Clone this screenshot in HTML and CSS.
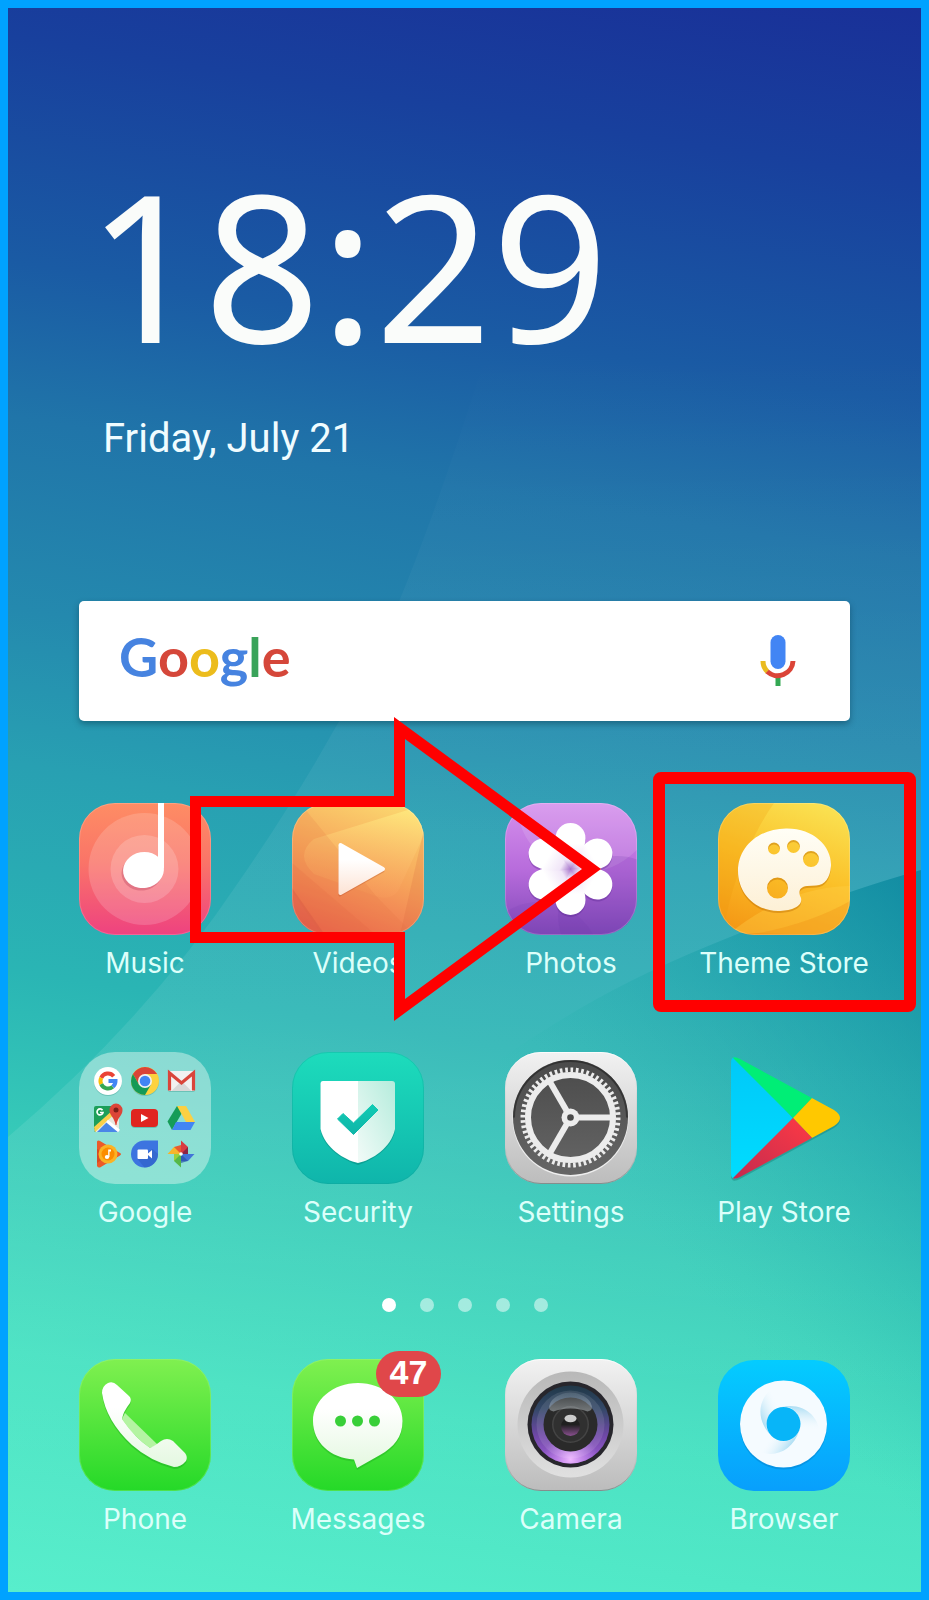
FILE: index.html
```html
<!DOCTYPE html>
<html lang="en">
<head>
<meta charset="utf-8">
<meta name="viewport" content="width=device-width, initial-scale=1">
<title>Home screen</title>
<link rel="stylesheet" href="styles.css">
</head>
<body>
<main class="screen">
  <svg class="wallpaper" viewBox="0 0 913 1584" preserveAspectRatio="none" aria-hidden="true">
    <defs>
      <linearGradient id="facetA" x1="0" y1="0" x2="0" y2="1"><stop offset="0" stop-color="#fff" stop-opacity="0"/><stop offset=".25" stop-color="#fff" stop-opacity=".04"/><stop offset=".6" stop-color="#fff" stop-opacity=".09"/><stop offset="1" stop-color="#fff" stop-opacity="0"/></linearGradient>
      <linearGradient id="facetB" gradientUnits="userSpaceOnUse" x1="913" y1="862" x2="500" y2="1250"><stop offset="0" stop-color="#008098" stop-opacity=".68"/><stop offset=".37" stop-color="#0897a0" stop-opacity=".34"/><stop offset=".67" stop-color="#14b0a4" stop-opacity=".08"/><stop offset=".8" stop-color="#20d0b0" stop-opacity="0"/></linearGradient>
    </defs>
    <path fill="url(#facetA)" d="M480 340Q430 500 390 596Q330 730 232 872Q140 1010 0 1129V1584H913V340Z"/>
    <path fill="url(#facetB)" d="M913 862Q820 888 700 938Q610 975 540 1020Q440 1080 380 1160L300 1584H913Z"/>
  </svg>

  <header class="clock">
    <time class="clock-time" datetime="18:29">18:29</time>
    <p class="clock-date">Friday, July 21</p>
  </header>

  <form class="search" role="search">
    <span class="wordmark"><span class="blue">G</span><span class="red">o</span><span class="yellow">o</span><span class="blue">g</span><span class="green">l</span><span class="red">e</span></span>
    <input class="search-input" type="search" aria-label="Search">
    <button class="mic" type="button" aria-label="Voice search">
      <svg viewBox="0 0 36 52"><rect x="10.500" width="15" height="34" rx="7.500" fill="#4285f4"/><path d="M15.500 42h5v9h-5z" fill="#34a853"/><path d="M3 26a15 15 0 0 0 4.500 10.800" fill="none" stroke="#eabb20" stroke-width="5"/><path d="M7.200 36.500A15.300 15.300 0 0 0 33 26" fill="none" stroke="#db4437" stroke-width="5"/></svg>
    </button>
  </form>

  <nav class="apps" aria-label="Apps">
    <a class="app" href="#music">
      <svg class="icon" viewBox="0 0 132 132">
        <defs><linearGradient id="mu" x1="0" y1="0" x2="0" y2="1"><stop offset="0" stop-color="#fe8d64"/><stop offset=".45" stop-color="#fa7468"/><stop offset="1" stop-color="#ee4280"/></linearGradient></defs>
        <rect width="132" height="132" rx="36" fill="url(#mu)"/><rect x=".5" y=".5" width="131" height="131" rx="35.500" fill="none" stroke="#fff" stroke-opacity=".18"/>
        <circle cx="65.500" cy="66" r="56" fill="#fff" opacity=".16"/><circle cx="65.500" cy="66" r="34" fill="#fff" opacity=".18"/>
        <g fill="#b03050" opacity=".3" transform="translate(-1 2)"><ellipse cx="64" cy="67.500" rx="20.500" ry="18" transform="rotate(-10 64 67.500)"/></g>
        <g fill="#fff"><ellipse cx="64.500" cy="67" rx="20.500" ry="18" transform="rotate(-10 64.500 67)"/><path d="M79 0h6v66l-6-8z"/></g>
      </svg>
      <span class="label">Music</span>
    </a>
    <a class="app" href="#videos">
      <svg class="icon" viewBox="0 0 132 132">
        <defs><linearGradient id="vi" x1=".7" y1="0" x2=".35" y2="1"><stop offset="0" stop-color="#fbd56e"/><stop offset=".5" stop-color="#f6a35a"/><stop offset="1" stop-color="#ee6a50"/></linearGradient><linearGradient id="vi2" x1=".7" y1="0" x2=".5" y2="1"><stop offset="0" stop-color="#ffec80"/><stop offset="1" stop-color="#f7985a" stop-opacity=".6"/></linearGradient><linearGradient id="vw" x1="0" y1="0" x2="0" y2="1"><stop offset=".3" stop-color="#fff"/><stop offset="1" stop-color="#fde4d6"/></linearGradient><clipPath id="vc"><rect width="132" height="132" rx="36"/></clipPath></defs>
        <g clip-path="url(#vc)"><rect width="132" height="132" fill="url(#vi)"/>
        <path d="M22 36L132 2V32L106 88Q98 98 84 93L22 71Q2 52 22 36Z" fill="url(#vi2)" opacity=".8"/>
        <path d="M0 0h8L84 93L122 132H30L0 88Z" fill="#e0703c" opacity=".16"/><path d="M0 85L33 132H0Z" fill="#c84a44" opacity=".28"/><path d="M132 26L108 132H132Z" fill="#d9643c" opacity=".2"/><path d="M0 60L84 132H0Z" fill="#e0603c" opacity=".15"/></g>
        <rect x=".5" y=".5" width="131" height="131" rx="35.500" fill="none" stroke="#fff" stroke-opacity=".2"/>
        <path d="M48 44L91 68L48 92Z" fill="#b04a28" stroke="#b04a28" stroke-width="3" stroke-linejoin="round" opacity=".3"/><path d="M48.500 42L91 66L48.500 90Z" fill="url(#vw)" stroke="url(#vw)" stroke-width="4" stroke-linejoin="round"/>
      </svg>
      <span class="label">Videos</span>
    </a>
    <a class="app" href="#photos">
      <svg class="icon" viewBox="0 0 132 132">
        <defs><linearGradient id="ph" x1="0" y1="0" x2="0" y2="1"><stop offset="0" stop-color="#d590ec"/><stop offset=".5" stop-color="#b86cdc"/><stop offset="1" stop-color="#8048b8"/></linearGradient><linearGradient id="pe" gradientUnits="userSpaceOnUse" x1="0" y1="-46" x2="0" y2="0"><stop offset=".45" stop-color="#fff"/><stop offset=".8" stop-color="#f1e6f8"/><stop offset="1" stop-color="#a878cc"/></linearGradient><path id="petal" d="M0 0C-7-8-15-19-15-31A15 15 0 0 1 15-31C15-19 7-8 0 0Z"/><clipPath id="pc"><rect width="132" height="132" rx="36"/></clipPath></defs>
        <g clip-path="url(#pc)"><rect width="132" height="132" fill="url(#ph)"/><circle cx="81" cy="0" r="69" fill="#fff" opacity=".12"/><circle cx="34" cy="160" r="61" fill="#6c38a8" opacity=".13"/><circle cx="112" cy="112" r="59" fill="#6c38a8" opacity=".18"/></g>
        <rect x=".5" y=".5" width="131" height="131" rx="35.500" fill="none" stroke="#fff" stroke-opacity=".2"/>
        <g transform="translate(65.500 68)" fill="#5a2890" opacity=".35"><use href="#petal"/><use href="#petal" transform="rotate(60)"/><use href="#petal" transform="rotate(120)"/><use href="#petal" transform="rotate(180)"/><use href="#petal" transform="rotate(240)"/><use href="#petal" transform="rotate(300)"/></g>
        <g transform="translate(65.500 66)" fill="url(#pe)"><use href="#petal" transform="rotate(60)"/><use href="#petal" transform="rotate(120)"/><use href="#petal" transform="rotate(180)"/><use href="#petal" transform="rotate(240)"/><use href="#petal" transform="rotate(300)"/><use href="#petal"/></g>
      </svg>
      <span class="label">Photos</span>
    </a>
    <a class="app" href="#theme-store">
      <svg class="icon" viewBox="0 0 132 132">
        <defs><linearGradient id="th" x1=".7" y1="0" x2=".35" y2="1"><stop offset="0" stop-color="#fae050"/><stop offset=".5" stop-color="#fbc028"/><stop offset="1" stop-color="#f59a16"/></linearGradient><linearGradient id="tw" x1="0" y1="0" x2="0" y2="1"><stop offset="0" stop-color="#fffef6"/><stop offset="1" stop-color="#fdf0d6"/></linearGradient><clipPath id="tc"><rect width="132" height="132" rx="36"/></clipPath><path id="pal" fill-rule="evenodd" d="M68 25.500C96 25 114 44 113 63C112 75 107 82 98 82.500L89 83C81 84 80 89 83 95C85 104 72 108 60 108C37 108 20 90 20 68C20 44 40 26 68 25.500ZM62 45.500a6 6 0 1 0-12 0a6 6 0 1 0 12 0ZM82 43.500a6.500 6.500 0 1 0-13 0a6.500 6.500 0 1 0 13 0ZM101 56a8 8 0 1 0-16 0a8 8 0 1 0 16 0ZM70 85a10.500 10.500 0 1 0-21 0a10.500 10.500 0 1 0 21 0Z"/></defs>
        <g clip-path="url(#tc)"><rect width="132" height="132" fill="url(#th)"/><path d="M0 0H56C35 30 12 80 5 132H0Z" fill="#ee9408" opacity=".22"/><path d="M12 130Q70 84 132 83V132Z" fill="#ffd24a" opacity=".35"/><path d="M30 132Q90 122 132 98V132Z" fill="#f08a10" opacity=".3"/></g>
        <rect x=".5" y=".5" width="131" height="131" rx="35.500" fill="none" stroke="#fff" stroke-opacity=".2"/>
        <use href="#pal" y="2" fill="#b86a00" opacity=".4"/><use href="#pal" fill="url(#tw)"/>
      </svg>
      <span class="label">Theme Store</span>
    </a>

    <a class="app" href="#google">
      <svg class="icon" viewBox="0 0 132 132">
        <rect width="132" height="132" rx="36" fill="#d5f3ec" opacity=".5"/>
        <g transform="translate(29 29)"><circle cy="1" r="14" fill="#3a9a8c" opacity=".4"/><circle r="14" fill="#fff"/><g fill="none" stroke-width="4"><path d="M5.700-4.800A7.500 7.500 0 0 0-6.800-3.200" stroke="#ea4335"/><path d="M-6.800-3.200A7.500 7.500 0 0 0-6.800 3.200" stroke="#fbbc05"/><path d="M-6.800 3.200A7.500 7.500 0 0 0 4.800 5.800" stroke="#34a853"/><path d="M4.800 5.800A7.500 7.500 0 0 0 7.500 0H.500" stroke="#4285f4"/></g></g>
        <g transform="translate(66 29)"><circle cy="1" r="14" fill="#3a9a8c" opacity=".4"/><circle r="14" fill="#fdd23e"/><path d="M-12.100-7A14 14 0 0 1 12.100-7H0L-6 3.500Z" fill="#db4437"/><path d="M-12.100-7A14 14 0 0 0 0 14L6 3.500L-6 3.500Z" fill="#149a56"/><circle r="7" fill="#f1f1f1"/><circle r="5.300" fill="#4285f4"/></g>
        <g transform="translate(102.500 29)"><rect x="-13.500" y="-9" width="27" height="20" rx="2" fill="#3a9a8c" opacity=".4"/><rect x="-13.500" y="-10" width="27" height="20" rx="2" fill="#f1f1f1"/><path d="M-10 10L0 0L10 10Z" fill="#d8d8d8"/><path d="M-12 9.500V-8L0 2L12-8V9.500" fill="none" stroke="#d9453a" stroke-width="3.200"/></g>
        <g transform="translate(28 67)"><rect x="-13" y="-13" width="25" height="26" rx="2" fill="#1d9f59"/><path d="M-13 11L12-13V13H-11Z" fill="#e8e8e0"/><path d="M-10 13L1 2L12 13Z" fill="#4a86e8"/><path d="M-13 8L7-10L11-8L-12 13Z" fill="#fbd04a"/><path d="M0 2L12 12" stroke="#fff" stroke-width="3"/><path d="M-4.500-8.800A3 3 0 1 0-4-6.500H-7" fill="none" stroke="#fff" stroke-width="1.700"/><path d="M9-15.500a6.500 6.500 0 0 1 6.500 6.500C15.500-3 10.500-2 9.500 6H8.500C7.500-2 2.500-3 2.500-9A6.500 6.500 0 0 1 9-15.500Z" fill="#dc4438"/><circle cx="9" cy="-9" r="2.500" fill="#7c1d18"/></g>
        <g transform="translate(65.500 66)"><rect x="-13.500" y="-8" width="27" height="18" rx="4" fill="#3a9a8c" opacity=".45"/><rect x="-13.500" y="-9" width="27" height="18" rx="4" fill="#e02520"/><path d="M-3.500-4L4 0L-3.500 4Z" fill="#fff"/></g>
        <g transform="translate(102 66)"><path d="M-4-12H5L-5.500 6L-9 12L-13.500 3.500Z" fill="#159c58"/><path d="M-4-12H5L14 4H5Z" fill="#fbd043"/><path d="M-5 4H14L9.500 12H-9Z" fill="#4285f4"/></g>
        <g transform="translate(29 102)"><path d="M-11-12.500Q-10-14-8-13L12-1Q14 0 12 1.500L-8 13.500Q-10 14-11 12Z" fill="#ec5a28"/><path d="M-11-5L1 0L-11 9Z" fill="#d94b20"/><circle cx="0" cy="0" r="9.500" fill="#fbb325"/><circle r="6.500" fill="#fb8c00"/><ellipse cx="-1" cy="3" rx="2.200" ry="2" fill="#fff"/><path d="M.2 3V-4.500H3V-2.500H1.500V3Z" fill="#fff"/></g>
        <g transform="translate(65.500 102)"><path d="M0-13.500H13.500V0A13.500 13.500 0 1 1 0-13.500Z" fill="#3c74e0"/><path d="M-7 5L0 13.500A13.500 13.500 0 0 0 13.500 0L8-5Z" fill="#2c5cc0" opacity=".5"/><rect x="-7" y="-4.500" width="10.500" height="9.500" rx="1" fill="#fff"/><path d="M3.500-.5L7.500-4V4.500L3.500 1Z" fill="#fff"/></g>
        <g transform="translate(102 102)"><path d="M0 0V-13.500L7-7V0Z" fill="#d83a40"/><path d="M0 0H13.500L7 7H0Z" fill="#4274d8"/><path d="M0 0V13.500L-7 7V0Z" fill="#55b848"/><path d="M0 0H-13.500L-7-7H0Z" fill="#f6b52c"/><path d="M0 0L-7-7L0-9Z" fill="#e85a30"/><path d="M0 0L7-7V0Z" fill="#8d2344"/><path d="M0 0L7 7L0 9Z" fill="#2850a8" opacity=".7"/><path d="M0 0L-7 7V0Z" fill="#9ad03c"/><circle r="1.800" fill="#fff"/></g>
      </svg>
      <span class="label">Google</span>
    </a>
    <a class="app" href="#security">
      <svg class="icon" viewBox="0 0 132 132">
        <defs><linearGradient id="se" x1="0" y1="0" x2="0" y2="1"><stop offset="0" stop-color="#1ddcbc"/><stop offset="1" stop-color="#0fb5ab"/></linearGradient><linearGradient id="sr" x1="1" y1="0" x2="0" y2="1"><stop offset="0" stop-color="#b5ecdc"/><stop offset="1" stop-color="#f2fbf8"/></linearGradient><linearGradient id="sk" x1="0" y1="0" x2="0" y2="1"><stop offset="0" stop-color="#10cbb4"/><stop offset="1" stop-color="#10b5a8"/></linearGradient></defs>
        <rect width="132" height="132" rx="36" fill="url(#se)"/><rect x=".5" y=".5" width="131" height="131" rx="35.500" fill="none" stroke="#0c9c92" stroke-opacity=".3"/>
        <path d="M28.500 33Q28.500 31 31 31H100Q103 31 103 33V79C99 98 80 108 66 113C52 108 33 98 28.500 79Z" fill="#06796f" opacity=".4"/>
        <path d="M66 29H31Q28.500 29 28.500 32V77C33 96 52 108 66 111Z" fill="#fff"/><path d="M66 29H100Q103 29 103 32V77C99 96 80 108 66 111Z" fill="url(#sr)"/>
        <path d="M45.500 67L51 61.500L61.500 71L80.500 52.500L86 58L61.500 82.500Z" fill="url(#sk)" stroke="url(#sk)" stroke-linejoin="round"/>
      </svg>
      <span class="label">Security</span>
    </a>
    <a class="app" href="#settings">
      <svg class="icon" viewBox="0 0 132 132">
        <defs><linearGradient id="st" x1="0" y1="0" x2="0" y2="1"><stop offset="0" stop-color="#f2f2f2"/><stop offset="1" stop-color="#bcbcbc"/></linearGradient><linearGradient id="rim" x1="0" y1="0" x2="0" y2="1"><stop offset="0" stop-color="#fff" stop-opacity=".8"/><stop offset=".7" stop-color="#999" stop-opacity="0"/><stop offset="1" stop-color="#6c7a78" stop-opacity=".7"/></linearGradient><linearGradient id="sg" x1="0" y1="0" x2="0" y2="1"><stop offset="0" stop-color="#4a4a4a"/><stop offset="1" stop-color="#666"/></linearGradient></defs>
        <rect width="132" height="132" rx="36" fill="url(#st)"/><rect x=".5" y=".5" width="131" height="131" rx="35.500" fill="none" stroke="url(#rim)"/>
        <circle cx="65.500" cy="66.500" r="58" fill="#eee"/><circle cx="65.500" cy="65.500" r="57.500" fill="url(#sg)"/><path d="M9 65.500A56.500 56.500 0 0 1 122 65.500" fill="none" stroke="#222" stroke-width="2" opacity=".6"/>
        <g fill="none" stroke="#ececec" transform="translate(65.500 65.500)"><circle r="42.500" stroke-width="6"/><circle r="47.500" stroke-width="5" pathLength="112" stroke-dasharray="1 1"/><path d="M8 0H41" stroke-width="6"/><path d="M8 0H41" stroke-width="6" transform="rotate(120)"/><path d="M8 0H41" stroke-width="6" transform="rotate(240)"/></g>
        <circle cx="65.500" cy="65.500" r="9" fill="#ececec"/><circle cx="65.500" cy="65.500" r="3.300" fill="#4a4a4a"/>
      </svg>
      <span class="label">Settings</span>
    </a>
    <a class="app" href="#play-store">
      <svg class="icon" viewBox="0 0 132 132">
        <defs><linearGradient id="pb" x1="0" y1="0" x2="0" y2="1"><stop offset="0" stop-color="#00c8f8"/><stop offset="1" stop-color="#00ddff"/></linearGradient><linearGradient id="pr" x1="1" y1="0" x2="0" y2="1"><stop offset="0" stop-color="#ff3a44"/><stop offset="1" stop-color="#c02a50"/></linearGradient><clipPath id="ps"><path id="tri" d="M13 11Q13 2 22 7L116 58Q128 66 116 74L22 125Q13 130 13 121Z"/></clipPath></defs>
        <use href="#tri" y="2" fill="#14776f" opacity=".4"/>
        <g clip-path="url(#ps)"><path d="M0 0H13L75 66L13 132H0Z" fill="url(#pb)"/><path d="M13 0V4L75 66L98 42L40 0Z" fill="#00ee76"/><path d="M75 66L94 46L132 50V84L94 86Z" fill="#ffc800"/><path d="M75 66L13 128V132H40L98 90Z" fill="url(#pr)"/></g>
      </svg>
      <span class="label">Play Store</span>
    </a>
  </nav>

  <div class="pages" role="img" aria-label="Page 1 of 5"><i class="dot current"></i><i class="dot"></i><i class="dot"></i><i class="dot"></i><i class="dot"></i></div>

  <nav class="apps dock" aria-label="Dock">
    <a class="app" href="#phone">
      <svg class="icon" viewBox="0 0 132 132">
        <defs><linearGradient id="gr" x1="0" y1="0" x2="0" y2="1"><stop offset="0" stop-color="#80f050"/><stop offset="1" stop-color="#25d928"/></linearGradient><linearGradient id="pw" x1="0" y1="0" x2="0" y2="1"><stop offset=".3" stop-color="#fff"/><stop offset="1" stop-color="#e4f8e0"/></linearGradient><path id="hs" d="M23 34Q23 27 29 24Q34 22 38 26L50 37Q53 40 51 44Q44 53 43 60Q56 79 71 89Q76 87 82 82Q88 78 94 82L106 94Q109 98 107 102Q102 108 95 108Q71 102 53 86Q27 62 23 34Z"/></defs>
        <rect width="132" height="132" rx="36" fill="url(#gr)"/><rect x=".5" y=".5" width="131" height="131" rx="35.500" fill="none" stroke="#b0f8a0" stroke-opacity=".3"/>
        <use href="#hs" y="2" fill="#159a1c" opacity=".35"/><path d="M46 54L79 86L71 89Q55 78 43 60Z" fill="#b4f4a2"/><use href="#hs" fill="url(#pw)"/>
      </svg>
      <span class="label">Phone</span>
    </a>
    <a class="app" href="#messages">
      <span class="icon-wrap">
      <svg class="icon" viewBox="0 0 132 132">
        <rect width="132" height="132" rx="36" fill="url(#gr)"/><rect x=".5" y=".5" width="131" height="131" rx="35.500" fill="none" stroke="#b0f8a0" stroke-opacity=".3"/>
        <path d="M66 24C91 24 110.500 41 110.500 62C110.500 78 102 88 88 96L65 109L62 100.500C38 99 21 83 21 62C21 41 41 24 66 24Z" transform="translate(0 2)" fill="#159a1c" opacity=".3"/>
        <path d="M66 24C91 24 110.500 41 110.500 62C110.500 78 102 88 88 96L65 109L62 100.500C38 99 21 83 21 62C21 41 41 24 66 24Z" fill="url(#pw)"/>
        <g fill="#38cf38"><circle cx="48.500" cy="62" r="5.500"/><circle cx="65.500" cy="62" r="5.500"/><circle cx="82.500" cy="62" r="5.500"/></g>
      </svg>
      <span class="badge">47</span>
      </span>
      <span class="label">Messages</span>
    </a>
    <a class="app" href="#camera">
      <svg class="icon" viewBox="0 0 132 132">
        <defs><linearGradient id="cr" x1="0" y1="0" x2="0" y2="1"><stop offset="0" stop-color="#b8b8b8"/><stop offset="1" stop-color="#e0e0e0"/></linearGradient><linearGradient id="cl" x1="0" y1="0" x2="0" y2="1"><stop offset="0" stop-color="#203848"/><stop offset=".3" stop-color="#344868"/><stop offset=".65" stop-color="#7048a8"/><stop offset="1" stop-color="#a060d8"/></linearGradient><radialGradient id="cg" cx=".5" cy=".95" r=".35"><stop offset="0" stop-color="#efb8ff"/><stop offset="1" stop-color="#d090f8" stop-opacity="0"/></radialGradient><linearGradient id="cs" x1="0" y1="0" x2="0" y2="1"><stop offset="0" stop-color="#b8c8d0" stop-opacity=".15"/><stop offset="1" stop-color="#c0c8cc" stop-opacity=".5"/></linearGradient><linearGradient id="ci" x1="0" y1="0" x2="0" y2="1"><stop offset=".4" stop-color="#202020"/><stop offset="1" stop-color="#8a5090"/></linearGradient></defs>
        <rect width="132" height="132" rx="36" fill="url(#st)"/><rect x=".5" y=".5" width="131" height="131" rx="35.500" fill="none" stroke="url(#rim)"/>
        <g transform="translate(65.500 65.500)"><circle r="53" fill="url(#cr)"/><circle r="43" fill="#27262c"/><circle r="39" fill="url(#cl)"/><circle r="39" fill="url(#cg)"/><circle r="34" fill="#fff" opacity=".1"/><circle r="27" fill="#2a2a2a"/><circle r="18.500" fill="#444"/><circle r="17" fill="#303030"/><circle r="9.500" cy="2" fill="url(#ci)"/><path d="M-20-22C-16-29-6-32 0-32S16-29 20-22Q24-14 17-13C8-17-8-17-17-13Q-24-14-20-22Z" fill="url(#cs)"/><ellipse cy="-6" rx="6" ry="3.800" fill="#ccc"/></g>
      </svg>
      <span class="label">Camera</span>
    </a>
    <a class="app" href="#browser">
      <svg class="icon" viewBox="0 0 132 132">
        <defs><linearGradient id="br" x1="0" y1="0" x2="0" y2="1"><stop offset="0" stop-color="#04ccff"/><stop offset="1" stop-color="#089ffc"/></linearGradient><linearGradient id="bs" gradientUnits="userSpaceOnUse" x1="-24" y1="-8" x2="-4" y2="-18"><stop offset="0" stop-color="#b0dff4"/><stop offset="1" stop-color="#f5fbff" stop-opacity="0"/></linearGradient><path id="sw" d="M-8-37C-25-28-29-6-13 11A17 17 0 0 1-2-17C-8-22-10-30-8-37Z"/></defs>
        <rect y="1" width="132" height="131" rx="36" fill="url(#br)"/>
        <circle cx="65.500" cy="67" r="43.500" fill="#0468b0" opacity=".3"/><circle cx="65.500" cy="65" r="43.500" fill="#f5fbff"/>
        <g transform="translate(65.500 65)" fill="url(#bs)"><use href="#sw"/><use href="#sw" transform="rotate(120)"/><use href="#sw" transform="rotate(240)"/></g>
        <circle cx="65.500" cy="65" r="17" fill="#08b5f8"/>
      </svg>
      <span class="label">Browser</span>
    </a>
  </nav>

  <svg class="markup" viewBox="0 0 913 1584" aria-hidden="true">
    <path fill="#f00" fill-rule="evenodd" d="M182 788H386V709L593 861L386 1013V935H182ZM193 799V924H397V991L574 861L397 731V799Z"/>
    <rect x="651" y="770" width="251" height="228" rx="2" fill="none" stroke="#f00" stroke-width="12"/>
  </svg>
</main>
</body>
</html>
```
FILE: styles.css
```css
* {
  box-sizing: border-box;
}

body {
  margin: 0;
  font-family: Inter, "Liberation Sans", sans-serif;
}

.screen {
  position: relative;
  min-height: 100vh;
  border: 8px solid #00a2ff;
  padding: 156px 71px 40px;
  background: linear-gradient(189deg, #193098 0%, #18409d 10%, #1a5ba4 23%, #2075a9 32%, #2489ae 43%, #28a0b2 52%, #2ab5b4 64%, #38cdb9 75%, #48e2c2 86%, #58eecc 100%);
}

.wallpaper,
.markup {
  position: absolute;
  top: 0;
  left: 0;
  width: 100%;
  height: 100%;
  pointer-events: none;
}

.clock,
.search,
.apps,
.pages {
  position: relative;
}

.clock {
  padding-left: 24px;
  color: #fafcfa;
}

.clock-time {
  display: block;
  margin-left: -16px;
  font: 400 204px/200px "Noto Sans", sans-serif;
}

.clock-date {
  margin: 47px 0 0;
  color: #f0fcff;
  font: 400 40px/56px Roboto, sans-serif;
}

.search {
  display: flex;
  align-items: center;
  height: 120px;
  margin-top: 134px;
  padding: 0 54px 0 40px;
  border-radius: 5px;
  background: #fff;
  box-shadow: 0 3px 6px rgba(0, 40, 60, .4);
}

.wordmark {
  padding-bottom: 8px;
  font: 700 54px/64px Lato, sans-serif;
}

.blue { color: #4683e0; }
.red { color: #d5473a; }
.yellow { color: #ecbc1c; }
.green { color: #3aa35a; }

.search-input {
  flex: 1;
  min-width: 0;
  height: 64px;
  border: 0;
  outline: 0;
  background: transparent;
  font: inherit;
}

.mic {
  width: 36px;
  height: 52px;
  padding: 0;
  border: 0;
  background: none;
}

.mic svg,
.icon {
  display: block;
  width: 100%;
}

.apps {
  display: grid;
  grid-template-columns: repeat(4, 132px);
  justify-content: space-between;
  row-gap: 69px;
  margin-top: 82px;
}

.app {
  display: flex;
  flex-direction: column;
  align-items: center;
  color: #dcfffa;
  text-decoration: none;
}

.icon,
.icon-wrap {
  width: 132px;
  height: 132px;
}

.icon-wrap {
  position: relative;
}

.label {
  margin-top: 8px;
  font-size: 28px;
  line-height: 40px;
  white-space: nowrap;
}

.badge {
  position: absolute;
  top: -8px;
  right: -17px;
  width: 65px;
  padding-bottom: 4px;
  border-radius: 23px;
  background: #e0474a;
  color: #fff;
  font: 700 34px/42px "Liberation Sans", sans-serif;
  text-align: center;
}

.pages {
  display: flex;
  justify-content: center;
  gap: 24px;
  margin-top: 66px;
}

.dot {
  width: 14px;
  height: 14px;
  border-radius: 50%;
  background: rgba(255, 255, 255, .5);
}

.dot.current {
  background: #fff;
}

.dock {
  margin-top: 47px;
}
```
